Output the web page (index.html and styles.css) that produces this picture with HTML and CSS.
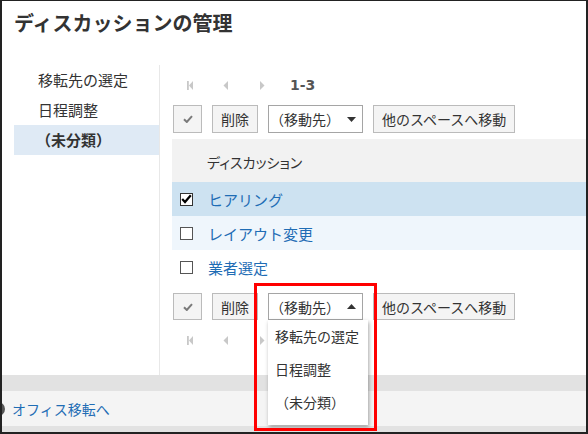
FILE: index.html
```html
<!DOCTYPE html>
<html lang="ja">
<head>
<meta charset="utf-8">
<title>ディスカッションの管理</title>
<link rel="stylesheet" href="styles.css">
</head>
<body>
<div class="frame">
  <h1 class="title">ディスカッションの管理</h1>
  <div class="content">
    <ul class="side">
      <li class="side-item">移転先の選定</li>
      <li class="side-item">日程調整</li>
      <li class="side-item is-current">（未分類）</li>
    </ul>
    <div class="main">
      <div class="pager">
        <svg class="pg pg-first" width="6" height="9" viewBox="0 0 6 9"><rect x="0" y="0" width="1.8" height="9"/><polygon points="6,0 6,9 2,4.5"/></svg>
        <svg class="pg pg-prev" width="5" height="9" viewBox="0 0 5 9"><polygon points="5,0 5,9 0.5,4.5"/></svg>
        <svg class="pg pg-next" width="5" height="9" viewBox="0 0 5 9"><polygon points="0,0 0,9 4.5,4.5"/></svg>
        <span class="pg-count">1-3</span>
      </div>
      <div class="actions">
        <button class="btn btn-check"><svg width="10" height="8" viewBox="0 0 10 8"><path d="M1 4.2 L3.8 7 L9 1.2" fill="none" stroke="#7a7a7a" stroke-width="2"/></svg></button>
        <button class="btn">削除</button>
        <div class="select"><span class="select-text">（移動先）</span><svg width="9" height="5" viewBox="0 0 9 5"><polygon points="0,0 9,0 4.5,5"/></svg></div>
        <button class="btn">他のスペースへ移動</button>
      </div>
      <div class="table">
        <div class="thead">ディスカッション</div>
        <div class="trow is-checked"><span class="cb cb-on"><svg width="11" height="10" viewBox="0 0 11 10"><path d="M1.2 5 L4 8 L9.8 1.2" fill="none" stroke="#000" stroke-width="2.2"/></svg></span><a class="link">ヒアリング</a></div>
        <div class="trow is-alt"><span class="cb"></span><a class="link">レイアウト変更</a></div>
        <div class="trow"><span class="cb"></span><a class="link">業者選定</a></div>
      </div>
      <div class="actions actions-bottom">
        <button class="btn btn-check"><svg width="10" height="8" viewBox="0 0 10 8"><path d="M1 4.2 L3.8 7 L9 1.2" fill="none" stroke="#7a7a7a" stroke-width="2"/></svg></button>
        <button class="btn">削除</button>
        <div class="select-wrap">
          <div class="select"><span class="select-text">（移動先）</span><svg width="9" height="5" viewBox="0 0 9 5"><polygon points="0,5 9,5 4.5,0"/></svg></div>
          <ul class="menu">
            <li class="menu-item">移転先の選定</li>
            <li class="menu-item">日程調整</li>
            <li class="menu-item">（未分類）</li>
          </ul>
          <div class="callout"></div>
        </div>
        <button class="btn">他のスペースへ移動</button>
      </div>
      <div class="pager">
        <svg class="pg pg-first" width="6" height="9" viewBox="0 0 6 9"><rect x="0" y="0" width="1.8" height="9"/><polygon points="6,0 6,9 2,4.5"/></svg>
        <svg class="pg pg-prev" width="5" height="9" viewBox="0 0 5 9"><polygon points="5,0 5,9 0.5,4.5"/></svg>
        <svg class="pg pg-next" width="5" height="9" viewBox="0 0 5 9"><polygon points="0,0 0,9 4.5,4.5"/></svg>
      </div>
    </div>
  </div>
  <div class="foot-band"></div>
  <div class="foot">
    <span class="foot-icon"></span>
    <a class="link foot-link">オフィス移転へ</a>
  </div>
  <div class="foot-end"></div>
</div>
</body>
</html>
```

FILE: styles.css
```css
* { box-sizing: border-box; }
html, body { margin: 0; padding: 0; }
body {
  width: 588px;
  height: 434px;
  overflow: hidden;
  background: #fff;
  font-family: "Noto Sans CJK JP", "Noto Sans", sans-serif;
  color: #333;
}
.frame {
  position: relative;
  width: 588px;
  height: 434px;
  border-style: solid;
  border-color: #222;
  border-width: 1px 2px 2px 2px;
  overflow: hidden;
  display: flex;
  flex-direction: column;
}
.title {
  margin: 0;
  height: 64px;
  padding: 9px 0 0 12px;
  font-size: 20px;
  line-height: 26px;
  font-weight: bold;
  color: #333;
  flex: none;
}
.content {
  display: flex;
  height: 310px;
  flex: none;
}
.side {
  list-style: none;
  margin: 0 0 0 12px;
  padding: 0;
  width: 145px;
  flex: none;
}
.side-item {
  height: 30px;
  line-height: 30px;
  padding-left: 24px;
  font-size: 15px;
  color: #333;
}
.side-item.is-current {
  background: #dfeaf5;
  font-weight: bold;
  padding-left: 22px;
}
.main {
  flex: 1;
  border-left: 1px solid #e8e8e8;
  padding-left: 12px;
  min-width: 0;
}
.pager {
  height: 40px;
  display: flex;
  align-items: center;
}
.pg { fill: #c8c8c8; flex: none; }
.pg-first { margin-left: 15px; }
.pg-prev { margin-left: 30px; }
.pg-next { margin-left: 32px; }
.pg-count {
  margin-left: 25px;
  font-size: 14px;
  font-weight: bold;
  color: #555;
  font-family: "DejaVu Sans", "Noto Sans CJK JP", sans-serif;
}
.actions {
  display: flex;
  align-items: stretch;
  height: 28px;
  padding-left: 1px;
  gap: 10px;
}
.actions-bottom {
  margin-top: 9px;
  height: 27px;
}
.btn {
  font-family: inherit;
  font-size: 14px;
  color: #333;
  background: #f4f4f4;
  border: 1px solid #bbb;
  border-radius: 0;
  padding: 0 8px;
  margin: 0;
  line-height: 1;
  display: flex;
  align-items: center;
  justify-content: center;
}
.btn-check { width: 29px; padding: 0; }
.select-wrap { position: relative; display: flex; }
.select {
  width: 95px;
  border: 1px solid #a5a5a5;
  background: #fff;
  display: flex;
  align-items: center;
  padding: 0 6px 0 1px;
  font-size: 14px;
  color: #333;
}
.select-text { flex: 1; }
.select svg { fill: #333; flex: none; }
.table { margin-top: 6px; }
.thead {
  height: 43px;
  line-height: 47px;
  background: #f2f2f2;
  padding-left: 35px;
  font-size: 14px;
  color: #333;
  font-feature-settings: "palt";
}
.trow {
  height: 34px;
  display: flex;
  align-items: center;
  padding-left: 8px;
  font-size: 15px;
}
.trow.is-checked { background: #cde2f1; }
.trow.is-alt { background: #eff6fc; }
.cb {
  width: 13px;
  height: 13px;
  border: 1px solid #555;
  background: #fff;
  margin-right: 15px;
  flex: none;
  display: flex;
  align-items: center;
  justify-content: center;
}
.cb-on { border-color: #333; }
.link { color: #1f6db5; text-decoration: none; }
.menu {
  position: absolute;
  top: 100%;
  left: 0;
  width: 100px;
  margin: 0;
  padding: 0 0 6px 0;
  list-style: none;
  background: #fff;
  box-shadow: 1px 2px 4px rgba(0, 0, 0, 0.35);
  z-index: 2;
}
.menu-item {
  height: 33px;
  line-height: 33px;
  padding-left: 7px;
  font-size: 14px;
  color: #333;
  white-space: nowrap;
}
.callout {
  position: absolute;
  left: -14px;
  top: -10px;
  width: 123px;
  height: 148px;
  border: 3px solid #f00;
  z-index: 3;
  pointer-events: none;
}
.foot-band {
  height: 16px;
  background: #e2e2e2;
  flex: none;
}
.foot {
  height: 35px;
  background: #f4f4f4;
  display: flex;
  align-items: center;
  flex: none;
  font-size: 14px;
}
.foot-icon {
  width: 14px;
  height: 14px;
  border-radius: 50%;
  background: #555;
  margin-left: -11px;
  margin-right: 7px;
  flex: none;
}
.foot-end {
  flex: 1;
  background: #e2e2e2;
}
```
